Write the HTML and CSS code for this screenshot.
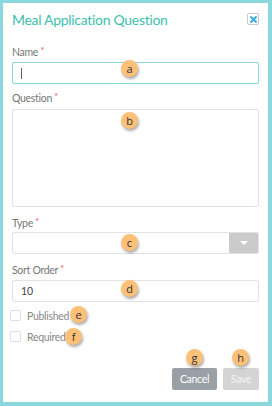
FILE: index.html
```html
<!DOCTYPE html>
<html>
<head>
<meta charset="utf-8">
<link rel="stylesheet" href="styles.css">
</head>
<body>
<div class="frame">
  <div class="dialog">
    <div class="header">
      <h1 class="title">Meal Application Question</h1>
      <span class="close">
        <svg width="7" height="7" viewBox="0 0 7 7"><path d="M1 1L6 6M6 1L1 6" stroke="#2fa9e0" stroke-width="1.8" stroke-linecap="round"/></svg>
      </span>
    </div>
    <div class="field f-name">
      <label class="label">Name <span class="req">*</span></label>
      <div class="input focus"><span class="caret"></span></div>
    </div>
    <div class="field f-question">
      <label class="label">Question <span class="req">*</span></label>
      <div class="textarea"></div>
    </div>
    <div class="field f-type">
      <label class="label">Type <span class="req">*</span></label>
      <div class="select">
        <div class="select-value"></div>
        <div class="select-btn"><svg width="8" height="5" viewBox="0 0 8 5"><path d="M0 0H8L4 4Z" fill="#fff"/></svg></div>
      </div>
    </div>
    <div class="field f-sort">
      <label class="label">Sort Order <span class="req">*</span></label>
      <div class="input">10</div>
    </div>
    <div class="checks">
      <div class="check"><span class="box"></span><span>Published</span></div>
      <div class="check"><span class="box"></span><span>Required</span></div>
    </div>
    <div class="actions">
      <button class="btn cancel">Cancel</button>
      <button class="btn save">Save</button>
    </div>

    <span class="badge b-a">a</span>
    <span class="badge b-b">b</span>
    <span class="badge b-c">c</span>
    <span class="badge b-d">d</span>
    <span class="badge b-e">e</span>
    <span class="badge b-f">f</span>
    <span class="badge b-g">g</span>
    <span class="badge b-h">h</span>
  </div>
</div>
</body>
</html>
```

FILE: styles.css
```css
* { box-sizing: border-box; }
html, body { margin: 0; padding: 0; }
body {
  width: 272px;
  height: 406px;
  font-family: Lato, "Open Sans", sans-serif;
  background: #8ad8de;
}
.frame {
  width: 272px;
  height: 406px;
  padding: 3px 4px 4px 3px;
}
.dialog {
  position: relative;
  background: #fff;
  height: 100%;
  padding: 0 9px 0 9px;
}
.header {
  display: flex;
  align-items: center;
  justify-content: space-between;
  height: 31px;
  padding-top: 1px;
}
.title {
  margin: 0;
  font-size: 14px;
  font-weight: 400;
  color: #3dbfae;
  letter-spacing: -0.3px;
}
.close {
  display: flex;
  align-items: center;
  justify-content: center;
  width: 12px;
  height: 12px;
  border: 1px solid #c9c9c9;
  border-radius: 2px;
}
.field {
  display: flex;
  flex-direction: column;
}
.f-name { margin-top: 10px; }
.f-question { margin-top: 6px; }
.f-type { margin-top: 8px; }
.f-sort { margin-top: 8px; }
.label {
  font-size: 10.5px;
  letter-spacing: -0.3px;
  line-height: 14px;
  color: #777;
  margin-bottom: 3px;
}
.f-question .label { margin-bottom: 4px; }
.f-type .label { margin-bottom: 2px; }
.req { color: #e8505b; font-size: 9px; vertical-align: 2px; }
.input {
  height: 22px;
  border: 1px solid #e2e2e2;
  border-radius: 2px;
  font-size: 10.5px;
  line-height: 20px;
  color: #444;
  padding-left: 8px;
  display: flex;
  align-items: center;
}
.input.focus { border-color: #8ad8de; }
.caret {
  display: block;
  width: 1px;
  height: 11px;
  background: #666;
}
.textarea {
  height: 98px;
  border: 1px solid #e2e2e2;
  border-radius: 2px;
}
.select {
  display: flex;
  height: 22px;
  border: 1px solid #e2e2e2;
  border-radius: 2px;
  overflow: hidden;
}
.select-value { flex: 1; }
.select-btn {
  width: 29px;
  background: #cbcbcb;
  display: flex;
  align-items: center;
  justify-content: center;
}
.checks {
  display: flex;
  flex-direction: column;
  gap: 10px;
  margin-top: 8px;
  margin-left: -2px;
}
.check {
  display: flex;
  align-items: center;
  gap: 6px;
  font-size: 10.5px;
  letter-spacing: -0.3px;
  color: #888;
  height: 11px;
}
.box {
  width: 11px;
  height: 11px;
  border: 1px solid #e0e0e0;
  border-radius: 1px;
}
.actions {
  display: flex;
  justify-content: flex-end;
  gap: 6px;
  margin-top: 26px;
}
.btn {
  height: 22px;
  border: none;
  border-radius: 2px;
  font-family: Lato, "Open Sans", sans-serif;
  font-size: 10.5px;
  letter-spacing: -0.3px;
  color: #fff;
  padding: 0;
}
.cancel { width: 45px; background: #9aa0a6; }
.save { width: 36px; background: #d4d4d4; color: #f4f4f4; }
.badge {
  position: absolute;
  width: 17px;
  height: 17px;
  border-radius: 50%;
  background: #fcc077;
  color: #2f3140;
  font-size: 11px;
  line-height: 17px;
  text-align: center;
  box-shadow: 1px 2px 3px rgba(0,0,0,0.35);
  font-family: "Open Sans", Lato, sans-serif;
}
.b-a { left: 118px; top: 57px; }
.b-b { left: 118px; top: 109px; }
.b-c { left: 118px; top: 231px; }
.b-d { left: 118px; top: 277px; }
.b-e { left: 67px; top: 303px; }
.b-f { left: 62px; top: 325px; }
.b-g { left: 183px; top: 346px; }
.b-h { left: 229px; top: 346px; }
```
